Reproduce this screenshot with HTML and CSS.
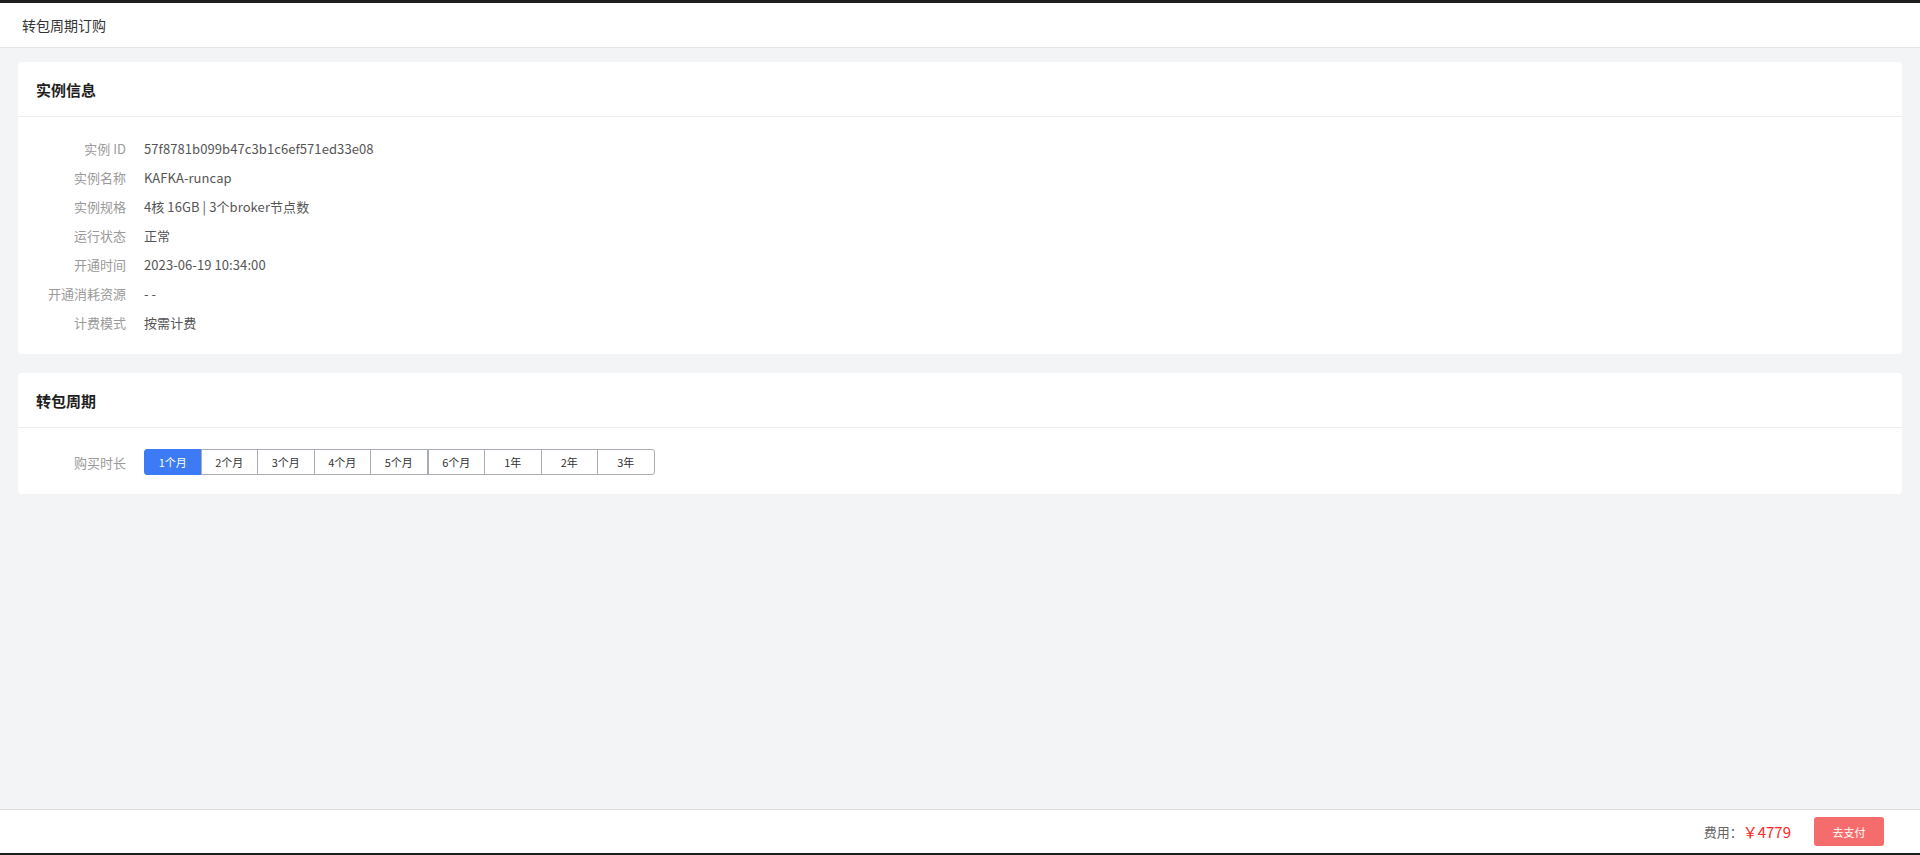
FILE: index.html
```html
<!DOCTYPE html>
<html lang="zh-CN">
<head>
<meta charset="utf-8">
<title>转包周期订购</title>
<link rel="stylesheet" href="styles.css">
</head>
<body>
<div class="app">
  <div class="frame-top"></div>
  <header class="topbar"><span class="page-title">转包周期订购</span></header>
  <main class="content">
    <section class="card">
      <div class="card-head"><h2 class="card-title">实例信息</h2></div>
      <div class="card-body info">
        <div class="row"><span class="label">实例 ID</span><span class="value">57f8781b099b47c3b1c6ef571ed33e08</span></div>
        <div class="row"><span class="label">实例名称</span><span class="value">KAFKA-runcap</span></div>
        <div class="row"><span class="label">实例规格</span><span class="value">4核 16GB | 3个broker节点数</span></div>
        <div class="row"><span class="label">运行状态</span><span class="value">正常</span></div>
        <div class="row"><span class="label">开通时间</span><span class="value">2023-06-19 10:34:00</span></div>
        <div class="row"><span class="label">开通消耗资源</span><span class="value">- -</span></div>
        <div class="row"><span class="label">计费模式</span><span class="value">按需计费</span></div>
      </div>
    </section>
    <section class="card">
      <div class="card-head"><h2 class="card-title">转包周期</h2></div>
      <div class="card-body period">
        <span class="label">购买时长</span>
        <div class="seg">
          <button class="seg-btn active">1个月</button>
          <button class="seg-btn">2个月</button>
          <button class="seg-btn">3个月</button>
          <button class="seg-btn">4个月</button>
          <button class="seg-btn">5个月</button>
          <button class="seg-btn split">6个月</button>
          <button class="seg-btn">1年</button>
          <button class="seg-btn">2年</button>
          <button class="seg-btn last">3年</button>
        </div>
      </div>
    </section>
  </main>
  <footer class="footer">
    <span class="fee-label">费用：</span><span class="fee">￥4779</span>
    <button class="pay-btn">去支付</button>
  </footer>
  <div class="frame-bottom"></div>
</div>
</body>
</html>
```

FILE: styles.css
```css
html, body {
  margin: 0;
  padding: 0;
}
body {
  font-family: "Microsoft YaHei", "Noto Sans CJK SC", "Noto Sans", sans-serif;
  color: #333;
}
.app {
  height: 855px;
  display: flex;
  flex-direction: column;
  background: #f3f4f6;
}
.frame-top {
  height: 3px;
  background: #1e1e1e;
  flex: none;
}
.frame-bottom {
  height: 2px;
  background: #1e1e1e;
  flex: none;
}
.topbar {
  flex: none;
  height: 44px;
  background: #fff;
  border-bottom: 1px solid #e3e5e8;
  display: flex;
  align-items: center;
  padding-left: 22px;
}
.page-title {
  font-size: 14px;
  color: #333;
}
.content {
  flex: 1;
  padding: 14px 18px 0;
}
.card {
  background: #fff;
  border-radius: 4px;
  margin-bottom: 19px;
}
.card-head {
  height: 54px;
  border-bottom: 1px solid #eceef1;
  display: flex;
  align-items: center;
  padding-left: 18px;
}
.card-title {
  margin: 0;
  font-size: 15px;
  font-weight: bold;
  color: #1f1f1f;
}
.info {
  padding: 17px 0 17px;
}
.row {
  display: flex;
  align-items: center;
  height: 29px;
  font-size: 13px;
}
.label {
  width: 108px;
  margin-right: 18px;
  text-align: right;
  color: #9a9a9a;
  font-size: 13px;
  flex: none;
}
.value {
  color: #555;
  letter-spacing: 0.08px;
}
.period {
  display: flex;
  align-items: center;
  padding: 21px 0 19px;
}
.seg {
  display: flex;
}
.seg-btn {
  width: 57.5px;
  height: 26px;
  margin: 0 0 0 -1px;
  padding: 0;
  border: 1px solid #a9acb3;
  background: #fff;
  color: #333;
  font-family: inherit;
  font-size: 11px;
  cursor: pointer;
}
.seg-btn.active {
  margin-left: 0;
  background: #3d7bf6;
  border-color: #3d7bf6;
  color: #fff;
  border-radius: 3px 0 0 3px;
}
.seg-btn.split {
  margin-left: 0;
}
.seg-btn.last {
  border-radius: 0 3px 3px 0;
}
.footer {
  flex: none;
  height: 43px;
  background: #fff;
  border-top: 1px solid #dcdde0;
  display: flex;
  align-items: center;
  justify-content: flex-end;
  padding-right: 36px;
}
.fee-label {
  font-size: 13px;
  color: #666;
}
.fee {
  font-size: 15px;
  color: #ff2424;
}
.pay-btn {
  margin-left: 23px;
  width: 70px;
  height: 29px;
  border: none;
  border-radius: 3px;
  background: #f56c6c;
  color: #fff;
  font-family: inherit;
  font-size: 11px;
  cursor: pointer;
}
```
